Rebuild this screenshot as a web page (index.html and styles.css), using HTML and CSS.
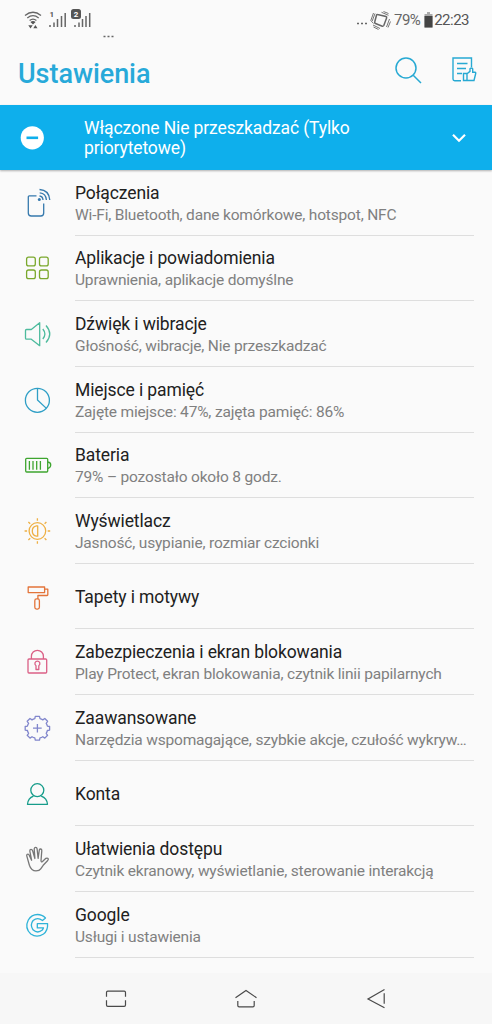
FILE: index.html
```html
<!DOCTYPE html>
<html lang="pl">
<head>
<meta charset="utf-8">
<title>Ustawienia</title>
<link rel="stylesheet" href="styles.css">
</head>
<body>
<div class="screen">
  <div class="status">
    <svg class="status-left" width="100" height="40" viewBox="0 0 100 40" fill="none" stroke="#666" stroke-width="1.3">
      <path d="M5 15.5Q13 9 21 15.5M7.3 18Q13 13.4 18.7 18M9.6 20.5Q13 17.7 16.4 20.5"/>
      <path d="M10.4 22Q13 19.8 15.6 22L13 24.5ZM8.3 25.2h4.4l-2.2 3.3zM13.3 28.3h4.2l-2.1-3.3z" fill="#555" stroke="none"/>
      <path d="M30 27v-2M34 27v-4.500M37.500 27v-8M41.500 27v-11M45.200 27v-14M55 27v-2M59 27v-4.500M62.500 27v-8M66 27v-11M69.700 27v-14" stroke-width="1.500"/>
      <rect x="51" y="9" width="10" height="10" rx="2.500" fill="#555" stroke="none"/>
      <text class="sim" x="29.500" y="17">1</text>
      <text class="sim sim-on" x="53.700" y="17">2</text>
      <path d="M83.500 36.500h2M87.500 36.500h2M91.500 36.500h2" stroke-width="1.500"/>
    </svg>
    <div class="status-right">
      <svg width="36" height="22" viewBox="0 0 36 22" fill="none" stroke="#666">
        <path d="M1 14.500h2M5 14.500h2M9 14.500h2" stroke-width="1.500"/>
        <path d="M21.500 5.500 30 7.500Q31 8 30.600 9L27.800 16.500Q27.300 17.400 26.300 17.200L19.500 14.500Q18.300 14 18.700 13L20.500 6.200Q20.800 5.300 21.500 5.500Z" stroke-width="1.500"/>
        <path d="M16.200 12l2.800-7.500M17.500 14.500 14.800 11.500 17.500 4M24 19.500l-7-3.500M22.500 20.500l-5-2.500M33.500 10l-3 8M34.500 12.500l-2.500 6M25.500 3.300l7 3M27.500 2.500l5 2" stroke-width=".9"/>
      </svg>
      <span class="percent">79%</span>
      <svg class="cell" width="9" height="16" viewBox="0 0 9 16"><path d="M3 0h3v2h2.500v13.500H.5V2H3z" fill="#aaa"/><path d="M.5 4h8v11.500h-8z" fill="#444"/></svg>
      <span class="clock">22:23</span>
    </div>
  </div>

  <header class="header">
    <h1>Ustawienia</h1>
    <svg class="search" width="28" height="28" viewBox="0 0 28 28" fill="none" stroke="#27a9d3" stroke-width="1.500"><circle cx="12" cy="12" r="10"/><path d="M19.200 19.200 27 27"/></svg>
    <svg class="feedback" width="25" height="26" viewBox="0 0 25 26" fill="none" stroke="#27a9d3" stroke-width="1.400">
      <path d="M19.500 10V1H1v21q0 1.700 1.700 1.700H9M5 6.500h10.500M5 11.500h9M5 16.500h5"/>
      <path d="M11.500 16.500h3.500v7h-3.500zM15 16.800l3-2.500v-2.500q1.700-1.700 2.700 0v3.500H23q1 0 .7 1.200L22 23.500h-7"/>
    </svg>
  </header>

  <div class="banner">
    <svg class="dnd" width="24" height="24" viewBox="0 0 24 24"><circle cx="12.300" cy="11.800" r="11.600" fill="#fff"/><path d="M6.500 11.800h11.600" stroke="#0eafec" stroke-width="2.600"/></svg>
    <p>Włączone Nie przeszkadzać (Tylko priorytetowe)</p>
    <svg class="chevron" width="16" height="12" viewBox="0 0 16 12" fill="none" stroke="#fff" stroke-width="2.200"><path d="M2 2.700 8 8.700l6-6"/></svg>
  </div>

  <main class="list">
    <div class="row">
      <svg class="icon blue" viewBox="0 0 30 30"><path d="M14.500 7.800H7.300q-1 0-1 1V25q0 3 3 3h9.400q3 0 3-3V15.500"/><circle class="dot" cx="17.300" cy="11.500" r="1.500"/><path d="M17.500 8Q20.800 8.300 21 12M17.700 4.800Q24 5.200 24.400 12M17.500 1.500Q27 2 27.800 12"/></svg>
      <div class="text"><h2>Połączenia</h2><p>Wi-Fi, Bluetooth, dane komórkowe, hotspot, NFC</p></div>
    </div>
    <div class="row">
      <svg class="icon lime" viewBox="0 0 30 30"><rect x="4.600" y="4.200" width="8.700" height="8.700" rx="2"/><rect x="17.500" y="4.200" width="8.700" height="8.700" rx="2"/><rect x="4.600" y="17" width="8.700" height="8.700" rx="2"/><rect x="17.500" y="17" width="8.700" height="8.700" rx="2"/></svg>
      <div class="text"><h2>Aplikacje i powiadomienia</h2><p>Uprawnienia, aplikacje domyślne</p></div>
    </div>
    <div class="row">
      <svg class="icon mint" viewBox="0 0 30 30"><path d="M3.500 11.500q0-1 1-1h4.800l8.400-6.800v23l-8.400-6.500H4.500q-1 0-1-1zM20.800 10Q25 15 20.800 20M24 6.500Q31.500 15 24 23.500"/></svg>
      <div class="text"><h2>Dźwięk i wibracje</h2><p>Głośność, wibracje, Nie przeszkadzać</p></div>
    </div>
    <div class="row">
      <svg class="icon sky" viewBox="0 0 30 30"><circle cx="15.400" cy="15.300" r="12"/><path d="M15.500 3.300V15l8.900 8.400"/></svg>
      <div class="text"><h2>Miejsce i pamięć</h2><p>Zajęte miejsce: 47%, zajęta pamięć: 86%</p></div>
    </div>
    <div class="row">
      <svg class="icon green" viewBox="0 0 30 30"><rect x="3.700" y="8.300" width="22" height="13.700" rx="1"/><path d="M7.400 11v8.700M11 11v8.700M14.700 11v8.700M18.400 11v8.700M25.700 12Q29 12.500 28.700 15.200T25.700 18.500"/></svg>
      <div class="text"><h2>Bateria</h2><p>79% – pozostało około 8 godz.</p></div>
    </div>
    <div class="row">
      <svg class="icon amber" viewBox="0 0 30 30"><circle cx="15.400" cy="15" r="8.300"/><path d="M15.700 9.800v10.400h-1.200Q10.300 19.500 10.300 15t4.200-5.200zM15.400 2.200v2.500M15.400 25.300v2.500M2.600 15h2.500M25.700 15h2.500M6.400 6l1.800 1.800M22.600 22.200l1.800 1.800M24.400 6l-1.800 1.800M8.200 22.200 6.400 24"/></svg>
      <div class="text"><h2>Wyświetlacz</h2><p>Jasność, usypianie, rozmiar czcionki</p></div>
    </div>
    <div class="row">
      <svg class="icon orange" viewBox="0 0 30 30"><rect x="6.200" y="5" width="16.400" height="5.600"/><path d="M22.600 7.200h3.200v5.600q0 .7-.7.700h-9.200v3.400"/><rect x="12.800" y="16.900" width="4.600" height="10.200" rx="1.800"/></svg>
      <div class="text single"><h2>Tapety i motywy</h2></div>
    </div>
    <div class="row">
      <svg class="icon pink" viewBox="0 0 30 30"><rect x="6" y="12" width="18.700" height="14" rx="1"/><path d="M9.400 12V9.300a6 6 0 0 1 12 0V12M14 18.700Q12.500 17.500 13 15.800q.8-1.600 2.400-1.600t2.400 1.600q.5 1.700-1 2.900v3.800H14z"/></svg>
      <div class="text"><h2>Zabezpieczenia i ekran blokowania</h2><p>Play Protect, ekran blokowania, czytnik linii papilarnych</p></div>
    </div>
    <div class="row">
      <svg class="icon violet" viewBox="0 0 30 30"><path d="M13.300 3.300h4.200l.5 2.400q1.500.3 2.800 1.200l2-1.400 2.800 2.800-1.400 2q.9 1.300 1.200 2.800l2.200.4v3.600l-2.200.4q-.3 1.500-1.200 2.800l1.400 2-2.800 2.800-2-1.400q-1.300.9-2.800 1.200l-.5 2.300h-4.200l-.5-2.300q-1.500-.3-2.800-1.200l-2 1.400-2.800-2.800 1.400-2q-.9-1.300-1.200-2.800l-2.200-.4v-3.600l2.200-.4q.3-1.500 1.200-2.800l-1.400-2L8 5.500l2 1.400q1.300-.9 2.800-1.200zM15.400 11v8.500M11 15.200h8.700"/></svg>
      <div class="text"><h2>Zaawansowane</h2><p>Narzędzia wspomagające, szybkie akcje, czułość wykryw…</p></div>
    </div>
    <div class="row">
      <svg class="icon teal" viewBox="0 0 30 30"><circle cx="15.300" cy="11.200" r="6.500"/><path d="M11.500 17.200Q6 19.200 5.500 25.300h20Q25 19.200 19.200 17.200"/></svg>
      <div class="text single"><h2>Konta</h2></div>
    </div>
    <div class="row">
      <svg class="icon gray" viewBox="0 0 30 30"><path d="M7.400 21.200 4.700 11.600q0-1.500 1.200-1.500 1 0 1.500 1.500l2.200 4.600L7.800 7q0-1.600 1.200-1.600T10.700 7l2.200 7.500-.7-9.600q.3-1.600 1.500-1.500t1.400 1.500l1 9.400L17.300 6q.4-1.200 1.500-1t1 1.600l-.8 10.200q.2 1.800 1.500.7l3.400-3.200q1.500-.6 2.200.2t-.6 2.200l-4.300 4.600-2.500 3.600q-1.200 2-4.700 2-4.700 0-6.600-5.700z"/></svg>
      <div class="text"><h2>Ułatwienia dostępu</h2><p>Czytnik ekranowy, wyświetlanie, sterowanie interakcją</p></div>
    </div>
    <div class="row">
      <svg class="icon cyan" viewBox="0 0 30 30"><path d="M23.500 8 20.500 10.500Q15.500 6.600 11.100 10.500 7.600 15 11 19.800q4.500 4.200 9.300.3l1.200-2.200H15.300v-4.200h10.300Q26 20.500 21.500 24q-6.600 4.200-12.700 0Q2.300 18 6.300 10 9.500 4.600 15.500 4.500 20 4.500 23.500 8z"/></svg>
      <div class="text"><h2>Google</h2><p>Usługi i ustawienia</p></div>
    </div>
  </main>

  <nav class="nav">
    <svg width="24" height="22" viewBox="0 0 24 22"><path d="M2.500 8.800V4.500Q2.500 3.200 3.800 3.200H20.200Q21.500 3.200 21.500 4.500V8.800M2.500 12.300V17Q2.500 18.300 3.800 18.300H20.200Q21.500 18.300 21.500 17V12.300"/></svg>
    <svg width="24" height="22" viewBox="0 0 24 22"><path d="M1.500 9.700 12 2.500l10.500 7.200M3.800 13V17.500Q3.800 18.800 5.100 18.800H18.900Q20.200 18.800 20.200 17.500V13"/></svg>
    <svg width="24" height="22" viewBox="0 0 24 22"><path d="M20.500 1.500 4 11l16.500 8.700M20.200 5.200v10.600"/></svg>
  </nav>
</div>
</body>
</html>
```
FILE: styles.css
```css
* { box-sizing: border-box; }
body { margin: 0; background: #fafafa; font-family: Roboto, "Noto Sans", sans-serif; }
h1, h2, p { margin: 0; font-weight: 400; }
svg { display: block; flex: none; }

.screen { width: 492px; height: 1024px; display: flex; flex-direction: column; overflow: hidden; }

.status { height: 40px; display: flex; justify-content: space-between; padding: 0 23px 0 20px; color: #666; }
.status-right { display: flex; align-items: center; height: 40px; font-size: 15px; }
.sim { font: 700 8px Roboto, sans-serif; fill: #555; stroke: none; }
.sim-on { fill: #fff; }
.percent { margin-left: 2px; letter-spacing: -0.6px; }
.cell { margin: 0 1px 0 4px; }
.clock { color: #555; letter-spacing: -0.5px; }

.header { height: 65px; display: flex; align-items: center; padding: 0 15px 0 18px; color: #27a9d9; }
.header h1 { flex: 1; font-size: 27px; letter-spacing: -0.05px; font-weight: 500; line-height: 32px; padding-top: 3px; }
.search { margin-right: 30px; margin-top: -6px; }
.feedback { margin-top: -5px; }

.banner { height: 65px; display: flex; align-items: center; padding: 0 25px 0 20px; background: #0eafec; color: #fff; box-shadow: 0 1px 2px rgba(0, 0, 0, .3); }
.banner p { flex: 1; margin-left: 40px; padding-right: 60px; font-size: 17.5px; letter-spacing: -0.12px; line-height: 20px; }

.list { display: grid; grid-auto-rows: 65.65px; height: 803px; }
.row { display: grid; grid-template-columns: 75px 399px; align-items: center; }
.icon { width: 30px; height: 30px; margin-left: 22px; fill: none; stroke: currentColor; stroke-width: 1.3; stroke-linejoin: round; }
.dot { fill: currentColor; stroke: none; }
.text { height: 100%; display: flex; flex-direction: column; justify-content: center; padding-top: 3px; border-bottom: 1px solid #dedede; min-width: 0; }
.single { padding-top: 2px; }
.text h2 { font-size: 17.5px; letter-spacing: -0.11px; line-height: 22px; color: #212121; }
.text p { font-size: 15.5px; letter-spacing: -0.18px; line-height: 22px; color: #808080; white-space: nowrap; }

.blue { color: #3679ad; }
.lime { color: #7aa82c; }
.mint { color: #4dbb9d; }
.sky { color: #2f9fc6; }
.green { color: #3ea52f; }
.amber { color: #eeb044; }
.orange { color: #e3743a; }
.pink { color: #db6086; }
.violet { color: #8186cc; }
.teal { color: #169c8a; }
.gray { color: #777; }
.cyan { color: #2fb3d8; }

.nav { flex: 1; display: flex; justify-content: space-between; padding: 15px 104px 0; background: #f7f7f7; }
.nav svg { fill: none; stroke: #4a4a4a; stroke-width: 1.2; }
```
